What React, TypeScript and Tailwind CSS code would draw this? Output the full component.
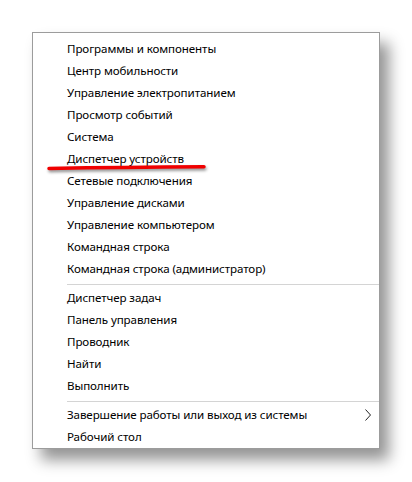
const group1 = [
  'Программы и компоненты',
  'Центр мобильности',
  'Управление электропитанием',
  'Просмотр событий',
  'Система',
  'Диспетчер устройств',
  'Сетевые подключения',
  'Управление дисками',
  'Управление компьютером',
  'Командная строка',
  'Командная строка (администратор)',
];

const group2 = ['Диспетчер задач', 'Панель управления', 'Проводник', 'Найти', 'Выполнить'];

function Row({ label, sub }: { label: string; sub?: boolean }) {
  return (
    <div className="h-[22px] flex items-center pl-[34px] pr-[6px] text-[11.6px] tracking-[-0.1px] text-black">
      <span className="flex-1 whitespace-nowrap">{label}</span>
      {sub && (
        <svg width="8" height="14" viewBox="0 0 8 14" className="mr-[1px]">
          <path d="M1.5 1.5 L6.5 7 L1.5 12.5" fill="none" stroke="#222" strokeWidth="1" />
        </svg>
      )}
    </div>
  );
}

function Separator() {
  return (
    <div className="pt-[4px] pb-[2px] pl-[34px]">
      <div className="h-px bg-[#d4d4d4]" />
    </div>
  );
}

export default function App() {
  return (
    <div
      className="relative w-[412px] h-[482px] bg-white pt-[32px] pl-[32px]"
      style={{ fontFamily: '"Noto Sans", "Liberation Sans", sans-serif' }}
    >
      <div className="w-[348px] h-[417px] bg-white border border-[#9c9c9c] pt-[5px] shadow-[9px_11px_14px_rgba(0,0,0,0.42)]">
        {group1.map(l => <Row key={l} label={l} />)}
        <Separator />
        {group2.map(l => <Row key={l} label={l} />)}
        <Separator />
        <Row label="Завершение работы или выход из системы" sub />
        <Row label="Рабочий стол" />
      </div>

      {/* red marker under "Диспетчер устройств" */}
      <svg
        width="166"
        height="12"
        viewBox="0 0 166 12"
        className="absolute left-[44px] top-[162px] drop-shadow-[1px_2px_1.5px_rgba(0,0,0,0.45)]"
      >
        <path d="M5 6.5 Q80 5.2 160 4.8" fill="none" stroke="#f00000" strokeWidth="3.5" strokeLinecap="round" />
      </svg>
    </div>
  );
}
